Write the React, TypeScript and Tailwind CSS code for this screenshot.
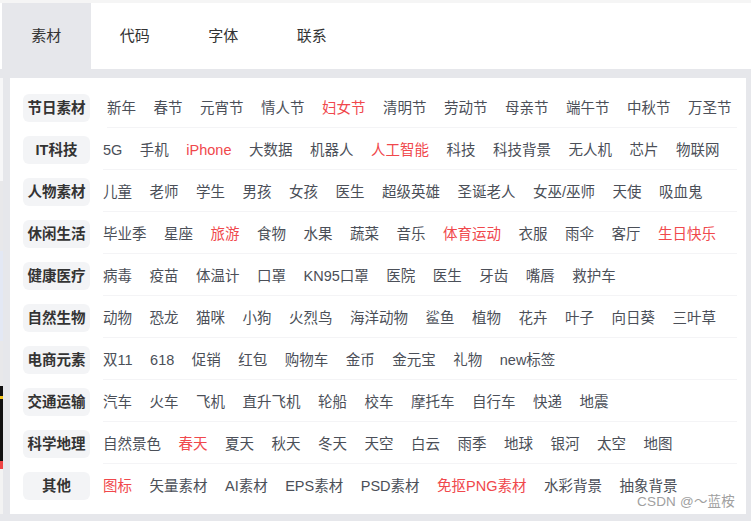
import React, { useState } from 'react';

type Item = { text: string; hot?: boolean };
type Category = { name: string; items: Item[]; rowClass?: string };

const t = (list: string, hot: string[] = []): Item[] =>
  list.split(' ').map((text) => ({ text, hot: hot.includes(text) }));

const categories: Category[] = [
  { name: '节日素材', items: t('新年 春节 元宵节 情人节 妇女节 清明节 劳动节 母亲节 端午节 中秋节 万圣节', ['妇女节']), rowClass: 'ml-1' },
  { name: 'IT科技', items: t('5G 手机 iPhone 大数据 机器人 人工智能 科技 科技背景 无人机 芯片 物联网', ['iPhone', '人工智能']) },
  { name: '人物素材', items: t('儿童 老师 学生 男孩 女孩 医生 超级英雄 圣诞老人 女巫/巫师 天使 吸血鬼') },
  { name: '休闲生活', items: t('毕业季 星座 旅游 食物 水果 蔬菜 音乐 体育运动 衣服 雨伞 客厅 生日快乐', ['旅游', '体育运动', '生日快乐']) },
  { name: '健康医疗', items: t('病毒 疫苗 体温计 口罩 KN95口罩 医院 医生 牙齿 嘴唇 救护车') },
  { name: '自然生物', items: t('动物 恐龙 猫咪 小狗 火烈鸟 海洋动物 鲨鱼 植物 花卉 叶子 向日葵 三叶草') },
  { name: '电商元素', items: t('双11 618 促销 红包 购物车 金币 金元宝 礼物 new标签') },
  { name: '交通运输', items: t('汽车 火车 飞机 直升飞机 轮船 校车 摩托车 自行车 快递 地震') },
  { name: '科学地理', items: t('自然景色 春天 夏天 秋天 冬天 天空 白云 雨季 地球 银河 太空 地图', ['春天']) },
  { name: '其他', items: t('图标 矢量素材 AI素材 EPS素材 PSD素材 免抠PNG素材 水彩背景 抽象背景', ['图标', '免抠PNG素材']) },
];

const tabs = ['素材', '代码', '字体', '联系'];

export default function App() {
  const [active, setActive] = useState(0);

  return (
    <div
      className="relative w-[751px] h-[521px] overflow-hidden bg-[#e6e7eb]"
      style={{ fontFamily: '"Liberation Sans", "Noto Sans CJK SC", sans-serif' }}
    >
      <div className="h-[3px] bg-[#f5f5f5]" />
      {/* tabs */}
      <div className="flex h-[66px] bg-white pl-[2px]">
        {tabs.map((tab, i) => (
          <button
            key={tab}
            onClick={() => setActive(i)}
            className={`w-[88.5px] h-full text-[15px] text-[#333] leading-none pb-[2px] ${active === i ? 'bg-[#e6e7eb]' : 'bg-white'}`}
          >
            {tab}
          </button>
        ))}
      </div>

      <div className="flex pt-[9px]">
        {/* page behind the panel */}
        <div className="w-[10px] flex">
          <div className="w-[3px] h-[436px] flex flex-col">
            <div className="h-[103px] bg-[#f7f7f8]" />
            <div className="h-[70px] bg-[#e8e8ea]" />
            <div className="h-[90px] bg-[#e3e8f4]" />
            <div className="h-[45px] bg-[#e8e8ea]" />
            <div className="h-[10px] bg-[#111]" />
            <div className="h-[3px] bg-[#f5c518]" />
            <div className="h-[62px] bg-[#111]" />
            <div className="h-[8px] bg-[#ef4444]" />
            <div className="flex-1 bg-[#f3f3f3]" />
          </div>
        </div>

        {/* panel */}
        <div className="w-[736px] h-[436px] bg-white pt-2 pb-2 pl-[13px] pr-[9px]">
          {categories.map((cat, idx) => (
            <div key={cat.name} className="flex h-[42px] items-stretch">
              <div className="flex items-center mr-[13px] pt-[1px]">
                <div className="w-[67px] h-[28px] rounded-md bg-[#f3f4f6] flex items-center justify-center text-[14.5px] font-bold text-[#333] leading-none pt-[2px]">
                  {cat.name}
                </div>
              </div>
              <div
                className={`flex-1 flex items-center gap-x-[17.5px] text-[14.5px] leading-none whitespace-nowrap pt-[3px] ${idx < categories.length - 1 ? 'border-b border-[#f4f4f6]' : ''} ${cat.rowClass ?? ''}`}
              >
                {cat.items.map((item) => (
                  <span key={item.text} className={item.hot ? 'text-[#f0484c]' : 'text-[#4b4f58]'}>
                    {item.text}
                  </span>
                ))}
              </div>
            </div>
          ))}
        </div>
      </div>

      <div className="absolute left-[637px] top-[495px] text-[13.5px] text-[#a0a0a0] leading-none tracking-[0.2px]">
        CSDN @～蓝桉
      </div>
    </div>
  );
}
